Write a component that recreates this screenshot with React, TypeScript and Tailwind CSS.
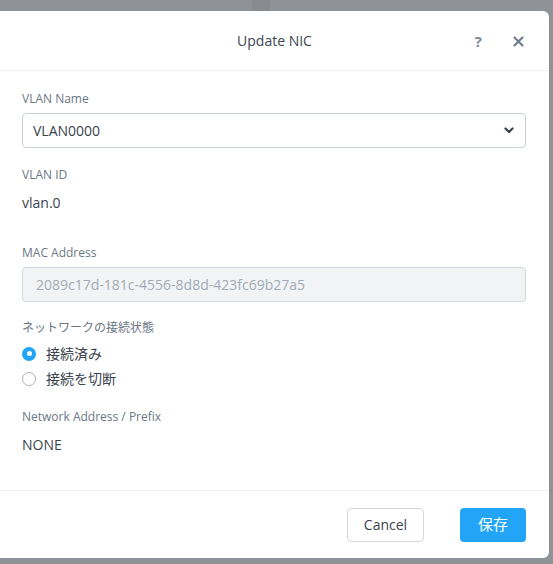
import React from 'react';

const font = '"Open Sans", "Noto Sans CJK JP", sans-serif';

function Label({ children, className = '' }: { children: React.ReactNode; className?: string }) {
  return <div className={`text-[12px] leading-4 text-[#6b7785] ${className}`}>{children}</div>;
}

function Radio({ checked, label }: { checked: boolean; label: string }) {
  return (
    <label className="flex h-[25px] items-center gap-[10px] text-[14px] text-[#3b434d]">
      {checked ? (
        <span className="flex h-[14px] w-[14px] items-center justify-center rounded-full bg-[#22a5f7]">
          <span className="h-[5px] w-[5px] rounded-full bg-white" />
        </span>
      ) : (
        <span className="h-[14px] w-[14px] rounded-full border border-[#a9b2bc] bg-white" />
      )}
      <span>{label}</span>
    </label>
  );
}

export default function App() {
  return (
    <div className="relative h-[564px] w-[553px] overflow-hidden bg-[#8f9296]" style={{ fontFamily: font }}>
      <div className="absolute left-[252px] top-0 h-[11px] w-[18px] bg-[#878a8e]" />
      <div className="relative -ml-2 mt-[11px] flex h-[547px] w-[557px] flex-col rounded-[6px] bg-white">
        {/* Header */}
        <div className="relative flex h-[60px] items-center justify-center border-b border-[#eceef1]">
          <span className="pl-2 text-[14px] text-[#3d4651]">Update NIC</span>
          <span className="absolute right-[67px] top-[19px] text-[15px] font-bold text-[#7d8896]">?</span>
          <svg className="absolute right-[25px] top-[25px]" width="11" height="11" viewBox="0 0 11 11">
            <path d="M1.5 1.5l8 8M9.5 1.5l-8 8" stroke="#6f7c8b" strokeWidth="2.2" strokeLinecap="round" />
          </svg>
        </div>

        {/* Body */}
        <div className="flex-1 pl-[30px] pr-[23px] pt-[20px]">
          <Label>VLAN Name</Label>
          <div className="mt-[6px] flex h-[35px] items-center justify-between rounded-[4px] border border-[#c9d0d8] pl-[10px] pr-[11px] text-[14px] text-[#3b434d]">
            <span>VLAN0000</span>
            <svg width="10" height="7" viewBox="0 0 10 7">
              <path d="M1.5 1.5l3.5 3.5 3.5-3.5" fill="none" stroke="#3b434d" strokeWidth="2.2" strokeLinecap="round" strokeLinejoin="round" />
            </svg>
          </div>

          <Label className="mt-[19px]">VLAN ID</Label>
          <div className="mt-[10px] text-[14px] leading-5 text-[#3b434d]">vlan.0</div>

          <Label className="mt-[32px]">MAC Address</Label>
          <div className="mt-[6px] flex h-[35px] items-center rounded-[4px] border border-[#d3d8de] bg-[#f1f3f5] pl-[13px] text-[14px] text-[#a3acb6]">
            2089c17d-181c-4556-8d8d-423fc69b27a5
          </div>

          <Label className="mt-[18px]">ネットワークの接続状態</Label>
          <div className="mt-[5px]">
            <Radio checked label="接続済み" />
            <Radio checked={false} label="接続を切断" />
          </div>

          <Label className="mt-[18px]">Network Address / Prefix</Label>
          <div className="mt-[10px] text-[14px] leading-5 text-[#3b434d]">NONE</div>
        </div>

        {/* Footer */}
        <div className="flex h-[68px] items-center justify-end gap-[36px] border-t border-[#eceef1] pr-[23px]">
          <button className="h-[34px] w-[77px] rounded-[4px] border border-[#d3d8de] bg-white text-[14px] text-[#3b434d]">
            Cancel
          </button>
          <button className="h-[34px] w-[66px] rounded-[4px] bg-[#22a5f7] text-[15px] text-white">保存</button>
        </div>
      </div>
    </div>
  );
}
